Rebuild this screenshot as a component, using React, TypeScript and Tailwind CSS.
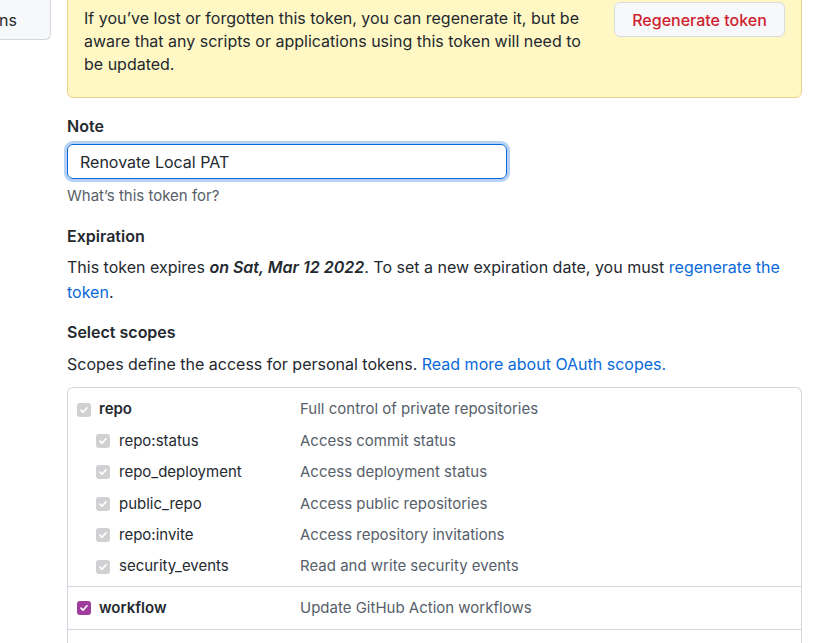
import type { ReactNode } from "react";

type Scope = {
  name: string;
  description: string;
  checked: "disabled" | "on";
  child?: boolean;
};

const repoScopes: Scope[] = [
  { name: "repo", description: "Full control of private repositories", checked: "disabled" },
  { name: "repo:status", description: "Access commit status", checked: "disabled", child: true },
  { name: "repo_deployment", description: "Access deployment status", checked: "disabled", child: true },
  { name: "public_repo", description: "Access public repositories", checked: "disabled", child: true },
  { name: "repo:invite", description: "Access repository invitations", checked: "disabled", child: true },
  { name: "security_events", description: "Read and write security events", checked: "disabled", child: true },
];

function Checkbox({ state }: { state: "disabled" | "on" }) {
  return (
    <span
      className={
        state === "on"
          ? "flex h-[14px] w-[14px] shrink-0 items-center justify-center rounded-[3px] bg-[#9e3b9c]"
          : "flex h-[14px] w-[14px] shrink-0 items-center justify-center rounded-[3px] bg-[#d1d1d4]"
      }
    >
      <svg width="10" height="10" viewBox="0 0 10 10" fill="none">
        <path d="M2 5.2l2 2 4-4.4" stroke="white" strokeWidth="1.7" strokeLinecap="round" strokeLinejoin="round" />
      </svg>
    </span>
  );
}

function ScopeRow({ scope }: { scope: Scope }) {
  return (
    <div className="flex h-[31.4px] items-center">
      <div className={scope.child ? "flex w-[232px] items-center gap-[9px] pl-[28px]" : "flex w-[232px] items-center gap-[8px] pl-[9px]"}>
        <Checkbox state={scope.checked} />
        <span className={scope.child ? "text-[15px] text-[#24292f]" : "text-[15px] font-semibold text-[#24292f]"}>{scope.name}</span>
      </div>
      <span className="text-[15px] text-[#57606a]">{scope.description}</span>
    </div>
  );
}

function Heading({ children }: { children: ReactNode }) {
  return <h3 className="text-[16px] font-semibold leading-6 text-[#24292f]">{children}</h3>;
}

export default function App() {
  return (
    <div className="flex h-[643px] overflow-hidden bg-white font-['Inter','Liberation_Sans',Arial,sans-serif] text-[#24292f]">
      <div className="w-[51px] shrink-0">
        <div className="flex h-[40px] items-center overflow-hidden rounded-br-md border-r border-b border-[#d0d7de] bg-[#f6f8fa] text-[16px]">
          <span className="-ml-[1px]">ns</span>
        </div>
      </div>

      <main className="ml-[16px] flex w-[735px] shrink-0 flex-col">
        <div className="-mt-[10px] flex items-start rounded-md border border-[#e7d38a] bg-[#fff8c5] px-4 pt-4 pb-[21px]">
          <p className="flex-1 text-[16px] leading-[23px]">
            If you’ve lost or forgotten this token, you can regenerate it, but be aware that any scripts or applications using this token will need to be updated.
          </p>
          <button className="mt-[-5px] ml-4 h-[35px] w-[171px] rounded-md border border-[#d8dbe0] bg-[#f6f8fa] text-[16px] font-medium text-[#cf222e]">
            Regenerate token
          </button>
        </div>

        <div className="mt-[16px]">
          <Heading>Note</Heading>
          <input
            readOnly
            value="Renovate Local PAT"
            className="mt-[6px] h-[35px] w-[440px] rounded-md border border-[#0969da] px-3 text-[16px] text-[#24292f] shadow-[0_0_0_3px_rgba(9,105,218,0.3)] outline-none"
          />
          <p className="mt-[6px] text-[15px] leading-[21px] text-[#57606a]">What’s this token for?</p>
        </div>

        <div className="mt-[18px]">
          <Heading>Expiration</Heading>
          <p className="mt-[7px] text-[16px] leading-[25px]">
            This token expires <em className="font-semibold">on Sat, Mar 12 2022</em>. To set a new expiration date, you must{" "}
            <a className="text-[#0969da]">regenerate the token</a>.
          </p>
        </div>

        <div className="mt-[15px]">
          <Heading>Select scopes</Heading>
          <p className="mt-[8px] text-[16px] leading-6">
            Scopes define the access for personal tokens. <a className="text-[#0969da]">Read more about OAuth scopes.</a>
          </p>
        </div>

        <div className="mt-[11px] flex-1 rounded-t-md border border-b-0 border-[#d0d7de]">
          <div className="pt-[6px] pb-[4px]">
            {repoScopes.map((s) => (
              <ScopeRow key={s.name} scope={s} />
            ))}
          </div>
          <div className="border-t border-[#d0d7de] py-[5px]">
            <ScopeRow scope={{ name: "workflow", description: "Update GitHub Action workflows", checked: "on" }} />
          </div>
          <div className="border-t border-[#d0d7de]" />
        </div>
      </main>
    </div>
  );
}
